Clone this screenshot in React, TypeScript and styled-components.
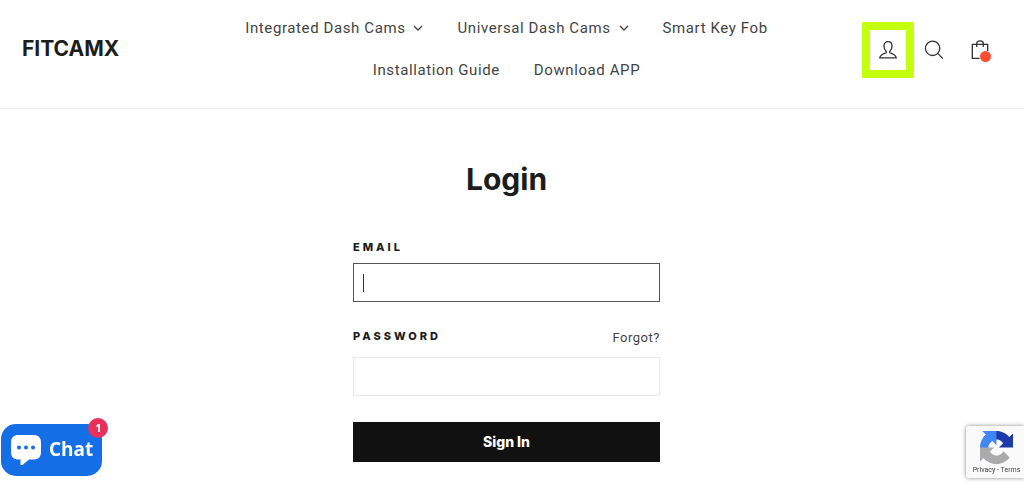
import React from "react";
import styled, { createGlobalStyle } from "styled-components";

const heading = `Inter, "Liberation Sans", sans-serif`;
const body = `Roboto, "Liberation Sans", sans-serif`;

const GlobalStyle = createGlobalStyle`
  *, *::before, *::after { box-sizing: border-box; }
  body {
    margin: 0;
    background: #fff;
    color: #1c1d1d;
    font-family: ${body};
  }
  a { color: inherit; text-decoration: none; }
`;

const Header = styled.header`
  display: grid;
  grid-template-columns: 1fr minmax(0, 580px) 1fr;
  align-items: center;
  padding: 7px 33px 17px 22px;
  border-bottom: 1px solid #ececec;
`;

const Logo = styled.a`
  justify-self: start;
  font: 700 21px/28px ${heading};
`;

const Nav = styled.nav`
  display: flex;
  flex-wrap: wrap;
  justify-content: center;
`;

const NavLink = styled.a`
  display: flex;
  align-items: center;
  gap: 8px;
  padding: 0 17px;
  font-size: 15px;
  line-height: 42px;
  letter-spacing: 0.04em;
  color: #444;
  white-space: nowrap;
`;

const Tools = styled.div`
  display: flex;
  justify-content: flex-end;
  gap: 24px;
  padding-top: 2px;
`;

const Tool = styled.a<{ $marked?: boolean }>`
  position: relative;
  display: block;
  width: 22px;
  height: 22px;

  ${(p) =>
    p.$marked &&
    `&::after {
      content: "";
      position: absolute;
      inset: -17px -15px;
      border: 8px solid #c4ff0e;
    }`}

  svg {
    display: block;
    width: 22px;
    height: 22px;
    fill: none;
    stroke: #333;
    stroke-width: 1.3;
  }
`;

const CartDot = styled.span`
  position: absolute;
  right: 0;
  bottom: -1px;
  width: 11px;
  height: 11px;
  border-radius: 50%;
  background: #ff4f33;
`;

const Main = styled.main`
  padding: 50px 27px 20px 16px;
`;

const Form = styled.form`
  display: flex;
  flex-direction: column;
  width: 100%;
  max-width: 307px;
  margin: 0 auto;
`;

const Title = styled.h1`
  margin: 0 0 40px;
  text-align: center;
  font: 700 30px/40px ${heading};
`;

const Field = styled.div`
  position: relative;
  margin-bottom: 26px;
`;

const FieldHead = styled.div`
  display: flex;
  justify-content: space-between;
  align-items: flex-start;
`;

const Label = styled.label`
  padding-bottom: 8px;
  font: 800 11px/16px ${heading};
  letter-spacing: 3px;
  text-transform: uppercase;
`;

const Forgot = styled.a`
  padding: 2px 0 11px;
  font-size: 13px;
  line-height: 16px;
  letter-spacing: 0.04em;
  color: #444;
`;

const Input = styled.input<{ $active?: boolean }>`
  display: block;
  width: 100%;
  height: 39px;
  padding: 8px 10px;
  border: 1px solid ${(p) => (p.$active ? "#555" : "#e9e9e9")};
  border-radius: 0;
  outline: none;
  background: #fff;
  font: 16px/21px ${body};
`;

const Caret = styled.span`
  position: absolute;
  left: 10px;
  bottom: 10px;
  width: 1px;
  height: 18px;
  background: #333;
`;

const Submit = styled.button`
  height: 40px;
  border: 0;
  background: #111;
  color: #fff;
  font: 800 14px/20px ${heading};
  cursor: pointer;
`;

const ChatButton = styled.button`
  position: fixed;
  left: 1px;
  bottom: 6px;
  display: flex;
  align-items: center;
  gap: 7px;
  height: 52px;
  padding: 0 9px 2px;
  border: 0;
  border-radius: 15px;
  background: #146ee6;
  color: #fff;
  font: 700 19px/28px "Open Sans", "Noto Sans", sans-serif;
  cursor: pointer;

  svg {
    display: block;
    width: 32px;
    height: 32px;
  }
`;

const ChatBadge = styled.span`
  position: absolute;
  top: -6px;
  right: -6px;
  width: 20px;
  height: 20px;
  border-radius: 50%;
  background: #e9305a;
  text-align: center;
  font: 700 11px/20px "Open Sans", "Noto Sans", sans-serif;
`;

const Captcha = styled.aside`
  position: fixed;
  right: 0;
  bottom: 4px;
  display: flex;
  flex-direction: column;
  align-items: center;
  gap: 2px;
  width: 58px;
  height: 52px;
  padding: 5px 0 0 3px;
  border-radius: 3px 0 0 3px;
  background: #fafafa;
  box-shadow: 0 0 4px #888;

  svg {
    display: block;
    width: 33px;
    height: 33px;
  }
`;

const CaptchaLinks = styled.div`
  font-size: 7px;
  line-height: 9px;
  color: #444;
  white-space: nowrap;
`;

const Chevron = () => (
  <svg width="10" height="6" viewBox="0 0 10 6" fill="none" stroke="#444" strokeWidth="1.3" aria-hidden="true">
    <path d="M1 1l4 4 4-4" />
  </svg>
);

const links = [
  { text: "Integrated Dash Cams", menu: true },
  { text: "Universal Dash Cams", menu: true },
  { text: "Smart Key Fob" },
  { text: "Installation Guide" },
  { text: "Download APP" },
];

export default function App() {
  return (
    <>
      <GlobalStyle />
      <Header>
        <Logo href="#">FITCAMX</Logo>
        <Nav>
          {links.map((l) => (
            <NavLink href="#" key={l.text}>
              {l.text}
              {l.menu && <Chevron />}
            </NavLink>
          ))}
        </Nav>
        <Tools>
          <Tool href="#" aria-label="Account" $marked>
            <svg viewBox="0 0 22 22">
              <path d="M11 2.700C8.400 2.700 7 4.500 7 7C7 9.500 8 11.300 9.200 12.300V13.700C7.500 14.600 3.200 14.900 2.800 18.900H19.200C18.800 14.900 14.500 14.600 12.800 13.700V12.300C14 11.300 15 9.500 15 7C15 4.500 13.600 2.700 11 2.700Z" />
            </svg>
          </Tool>
          <Tool href="#" aria-label="Search">
            <svg viewBox="0 0 22 22">
              <circle cx="9.600" cy="9.300" r="7.200" />
              <path d="M14.700 14.400L19.900 19.600" />
            </svg>
          </Tool>
          <Tool href="#" aria-label="Cart">
            <svg viewBox="0 0 22 22">
              <path d="M10.500 19.400H3.300V5.300H18.700V12M7.700 8V4.500C7.700 1 14.300 1 14.300 4.500V8" />
            </svg>
            <CartDot />
          </Tool>
        </Tools>
      </Header>
      <Main>
        <Form>
          <Title>Login</Title>
          <Field>
            <FieldHead>
              <Label htmlFor="email">Email</Label>
            </FieldHead>
            <Input id="email" type="email" $active />
            <Caret />
          </Field>
          <Field>
            <FieldHead>
              <Label htmlFor="password">Password</Label>
              <Forgot href="#">Forgot?</Forgot>
            </FieldHead>
            <Input id="password" type="password" />
          </Field>
          <Submit type="button">Sign In</Submit>
        </Form>
      </Main>
      <ChatButton type="button">
        <svg viewBox="0 0 32 32" aria-hidden="true">
          <path
            fill="#fff"
            d="M9 2H23C28.500 2 31 4.500 31 9.500V19C31 24 28.500 26.500 23 26.500H19L12.500 32C11.500 32.800 10.500 32.300 10.500 31V26.500H9C3.500 26.500 1 24 1 19V9.500C1 4.500 3.500 2 9 2Z"
          />
          <g fill="#146ee6">
            <circle cx="9" cy="14.500" r="2" />
            <circle cx="16" cy="14.500" r="2" />
            <circle cx="23" cy="14.500" r="2" />
          </g>
        </svg>
        Chat
        <ChatBadge>1</ChatBadge>
      </ChatButton>
      <Captcha>
        <svg viewBox="0 0 64 64" aria-hidden="true">
          <path
            fill="#1c3aa9"
            d="M64 31.955l-.016-1.370V4.687l-7.160 7.160C50.964 4.674 42.033.093 32.030.093c-10.408 0-19.655 4.960-25.494 12.640l11.736 11.860a15.550 15.550 0 0 1 4.754-5.334c2.050-1.600 4.952-2.906 8.968-2.906.485 0 .860.057 1.135.163 4.976.393 9.288 3.140 11.828 7.124l-8.307 8.307L64 31.953"
          />
          <path
            fill="#4285f4"
            d="M31.862.094l-1.370.016H4.594l7.160 7.160C4.580 13.130 0 22.060 0 32.063c0 10.408 4.960 19.655 12.640 25.494L24.500 45.820a15.550 15.550 0 0 1-5.334-4.754c-1.600-2.050-2.906-4.952-2.906-8.968 0-.485.057-.860.163-1.135.393-4.976 3.140-9.288 7.124-11.828l8.307 8.307L31.860.095"
          />
          <path
            fill="#ababab"
            d="M.001 32.045l.016 1.370v25.898l7.160-7.160c5.860 7.173 14.790 11.754 24.793 11.754 10.408 0 19.655-4.960 25.494-12.640l-11.736-11.860a15.550 15.550 0 0 1-4.754 5.334c-2.050 1.600-4.952 2.906-8.968 2.906-.485 0-.860-.057-1.135-.163-4.976-.393-9.288-3.140-11.828-7.124l8.307-8.307c-10.522.040-22.400.066-27.350-.005"
          />
        </svg>
        <CaptchaLinks>
          <a href="#">Privacy</a> - <a href="#">Terms</a>
        </CaptchaLinks>
      </Captcha>
    </>
  );
}
